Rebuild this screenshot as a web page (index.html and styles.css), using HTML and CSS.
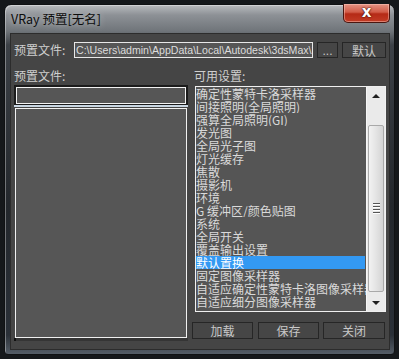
FILE: index.html
```html
<!DOCTYPE html>
<html>
<head>
<meta charset="utf-8">
<link rel="stylesheet" href="styles.css">
</head>
<body>
<div class="window">
  <div class="titlebar">
    <span class="title">VRay 预置[无名]</span>
    <div class="close"><span>x</span></div>
  </div>
  <div class="client">
    <div class="row1">
      <span class="lbl1">预置文件:</span>
      <div class="path">C:\Users\admin\AppData\Local\Autodesk\3dsMax\2014 - 64bit\CHS\plugcfg</div>
      <div class="btn dots">...</div>
      <div class="btn def">默认</div>
    </div>
    <div class="cols">
      <div class="leftcol">
        <div class="lbl">预置文件:</div>
        <div class="inputwrap"><div class="input"></div></div>
        <div class="lbox"></div>
        <div class="lshadow"></div>
      </div>
      <div class="rightcol">
        <div class="lbl rlbl">可用设置:</div>
        <div class="rlist">
          <div class="items">
            <div class="item">确定性蒙特卡洛采样器</div>
            <div class="item">间接照明(全局照明)</div>
            <div class="item">强算全局照明(GI)</div>
            <div class="item">发光图</div>
            <div class="item">全局光子图</div>
            <div class="item">灯光缓存</div>
            <div class="item">焦散</div>
            <div class="item">摄影机</div>
            <div class="item">环境</div>
            <div class="item">G 缓冲区/颜色贴图</div>
            <div class="item">系统</div>
            <div class="item">全局开关</div>
            <div class="item">覆盖输出设置</div>
            <div class="item sel">默认置换</div>
            <div class="item">固定图像采样器</div>
            <div class="item">自适应确定性蒙特卡洛图像采样器</div>
            <div class="item">自适应细分图像采样器</div>
          </div>
          <div class="sbar">
            <div class="sbtn"><span class="up"></span></div>
            <div class="track">
              <div class="thumb"><span class="grip"></span><span class="grip"></span><span class="grip"></span><span class="grip"></span></div>
            </div>
            <div class="sbtn"><span class="down"></span></div>
          </div>
        </div>
        <div class="btnrow">
          <div class="btn b1">加载</div>
          <div class="btn b2">保存</div>
          <div class="btn b3">关闭</div>
        </div>
      </div>
    </div>
  </div>
</div>
</body>
</html>
```

FILE: styles.css
```css
html, body {
  margin: 0;
  padding: 0;
  background: #15181b;
  width: 399px;
  height: 359px;
  overflow: hidden;
  font-family: "Noto Sans CJK SC", "Liberation Sans", sans-serif;
}
.window {
  box-sizing: border-box;
  margin: 4px 0 0 4px;
  width: 391px;
  height: 351px;
  border: 1px solid #101214;
  border-radius: 7px 7px 4px 4px;
  background: linear-gradient(180deg, #b9bcbf 0px, #8d9196 10px, #70757a 26px, #3c4147 40px, #23272c 200px, #2a3038 330px, #59626c 351px);
  padding: 0 4px 4px 5px;
  display: flex;
  flex-direction: column;
  box-shadow: inset 1px 1px 0 rgba(255,255,255,0.35);
}
.titlebar {
  height: 28px;
  display: flex;
  align-items: flex-start;
  justify-content: space-between;
}
.title {
  margin-top: 6px;
  margin-left: 1px;
  font-size: 12.5px;
  line-height: 16px;
  color: #0c0c0c;
  text-shadow: 0 0 6px rgba(255,255,255,0.6);
}
.close {
  width: 47px;
  height: 19px;
  margin-top: -1px;
  margin-right: 0;
  box-sizing: border-box;
  border: 1px solid #4a1610;
  border-top: none;
  border-radius: 0 0 5px 5px;
  background: linear-gradient(180deg, #e49484 0%, #d25c48 45%, #b52a16 55%, #c23c26 100%);
  display: flex;
  align-items: center;
  justify-content: center;
  box-shadow: inset 0 0 0 1px rgba(255,210,200,0.45);
}
.close span {
  font-family: "DejaVu Sans", sans-serif;
  font-weight: bold;
  font-size: 15px;
  line-height: 15px;
  color: #ffffff;
  margin-top: -2px;
  text-shadow: 0 0 2px #3a0a04, 0 0 1px #3a0a04;
}
.client {
  box-sizing: border-box;
  width: 380px;
  height: 317px;
  background: #454545;
  border: 1px solid #2c2c2c;
  padding: 8px 2px 0 3px;
}
.row1 {
  display: flex;
  height: 16px;
  align-items: stretch;
}
.lbl1 {
  width: 60px;
  font-size: 12px;
  line-height: 16px;
  color: #cfcfcf;
}
.path {
  box-sizing: border-box;
  width: 239px;
  border: 1px solid #e8e8e8;
  background: #565656;
  color: #dcdcdc;
  font-family: "Liberation Sans", sans-serif;
  font-size: 10.6px;
  line-height: 14px;
  padding-left: 1px;
  white-space: nowrap;
  overflow: hidden;
}
.btn {
  box-sizing: border-box;
  background: #464646;
  border: 1px solid #262626;
  color: #c8c8c8;
  font-size: 12px;
  display: flex;
  align-items: center;
  justify-content: center;
}
.dots {
  width: 21px;
  margin-left: 4px;
  font-family: "Liberation Sans", sans-serif;
  line-height: 12px;
  padding-top: 2px;
}
.def {
  width: 44px;
  margin-left: 4px;
}
.cols {
  display: flex;
  margin-top: 10px;
  gap: 4px;
}
.leftcol {
  width: 174px;
  display: flex;
  flex-direction: column;
}
.lbl {
  font-size: 12px;
  line-height: 15px;
  height: 15px;
  color: #cfcfcf;
}
.inputwrap {
  margin-top: 2px;
  height: 18px;
  background: #1b1b1b;
  padding: 2px 2px 0 2px;
  border-bottom: 2px solid #c9d6e2;
}
.input {
  box-sizing: border-box;
  height: 17px;
  border: 1px solid #f2f2f2;
  background: #565656;
}
.lbox {
  box-sizing: border-box;
  margin: 1px 1px 0 1px;
  height: 230px;
  border: 1px solid #f0f0f0;
  background: #565656;
}
.lshadow {
  height: 3px;
  background: #353535;
  border-left: 2px solid #111;
}
.rightcol {
  width: 195px;
  display: flex;
  flex-direction: column;
}
.rlbl {
  padding-left: 2px;
}
.rlist {
  box-sizing: border-box;
  margin: 3px 1px 0 3px;
  height: 226px;
  border: 1px solid #f0f0f0;
  background: #555555;
  display: flex;
}
.items {
  width: 171px;
  overflow: hidden;
}
.item {
  height: 13px;
  font-size: 12px;
  line-height: 13px;
  color: #dadada;
  white-space: nowrap;
  overflow: hidden;
}
.item.sel {
  background: #3399f3;
  color: #ffffff;
  margin-right: 1px;
}
.sbar {
  width: 18px;
  background: #eaeaea;
  display: flex;
  flex-direction: column;
  border-left: 1px solid #f6f6f6;
}
.sbtn {
  height: 17px;
  display: flex;
  align-items: center;
  justify-content: center;
}
.up {
  width: 0;
  height: 0;
  border-left: 4px solid transparent;
  border-right: 4px solid transparent;
  border-bottom: 4px solid #202020;
}
.down {
  width: 0;
  height: 0;
  border-left: 4px solid transparent;
  border-right: 4px solid transparent;
  border-top: 4px solid #202020;
}
.track {
  flex: 1;
  padding: 21px 1px 2px 1px;
  display: flex;
}
.thumb {
  flex: 1;
  box-sizing: border-box;
  border: 1px solid #a9a9a9;
  border-radius: 2px;
  background: linear-gradient(90deg, #f2f2f2 0%, #e4e4e4 50%, #d4d4d4 100%);
  display: flex;
  flex-direction: column;
  align-items: center;
  justify-content: center;
  gap: 1px;
}
.grip {
  width: 7px;
  height: 1px;
  background: #555;
  border-bottom: 1px solid #fff;
}
.btnrow {
  display: flex;
  margin-top: 10px;
  height: 17px;
}
.b1 { width: 61px; }
.b2 { width: 61px; margin-left: 5px; }
.b3 { width: 62px; margin-left: 4px; }
```
